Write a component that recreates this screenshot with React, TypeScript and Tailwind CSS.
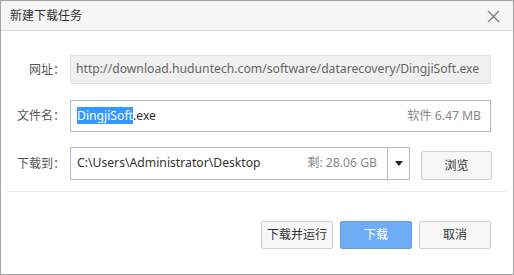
import React from "react";

const font = { fontFamily: '"Noto Sans", "Noto Sans CJK SC", sans-serif' };

export default function App() {
  return (
    <div
      className="w-[514px] h-[275px] bg-white border border-[#a3a3a3] flex flex-col text-[12.2px] text-[#333]"
      style={font}
    >
      <div className="h-[30px] bg-[#f5f5f5] border-b border-[#d9d9d9] flex items-center justify-between pl-[9px] pr-[13px] shrink-0">
        <span className="text-[12px] text-[#333] leading-none">新建下载任务</span>
        <svg width="13" height="13" viewBox="0 0 13 13" className="mt-[1px]">
          <path d="M1 1 L12 12 M12 1 L1 12" stroke="#777" strokeWidth="1.2" />
        </svg>
      </div>

      <div className="flex flex-col pt-[24px]">
        <div className="flex items-center h-[29px]">
          <div className="w-[69px] pr-[5px] text-right text-[#555] text-[12px]">网址：</div>
          <div className="w-[421px] h-[29px] bg-[#f0f0f0] border border-[#e0e0e0] flex items-center pl-[5px] text-[#666] whitespace-nowrap overflow-hidden">
            http://download.huduntech.com/software/datarecovery/DingjiSoft.exe
          </div>
        </div>

        <div className="flex items-center h-[32px] mt-[16px]">
          <div className="w-[69px] pr-[5px] text-right text-[#555] text-[12px]">文件名：</div>
          <div className="w-[421px] h-[32px] border border-[#aebfd0] flex items-center justify-between pl-[6px] pr-[9px] bg-white">
            <span className="text-[#333]">
              <span className="bg-[#3399ff] text-white">DingjiSoft</span>.exe
            </span>
            <span className="text-[#888]">软件 6.47 MB</span>
          </div>
        </div>

        <div className="flex items-center h-[33px] mt-[15px]">
          <div className="w-[69px] pr-[5px] text-right text-[#555] text-[12px]">下载到：</div>
          <div className="w-[340px] h-[33px] border border-[#aebfd0] flex items-center bg-white">
            <div className="flex-1 flex items-center justify-between pl-[6px] pr-[10px]">
              <span className="text-[#333]">C:\Users\Administrator\Desktop</span>
              <span className="text-[#888]">剩: 28.06 GB</span>
            </div>
            <div className="w-[22px] h-full border-l border-[#aebfd0] flex items-center justify-center">
              <svg width="8" height="5" viewBox="0 0 8 5">
                <path d="M0 0 L8 0 L4 5 Z" fill="#222" />
              </svg>
            </div>
          </div>
          <button className="ml-[11px] w-[71px] h-[29px] mt-[4px] border border-[#cfcfcf] bg-[#f6f6f6] rounded-[2px] text-[#333] text-[12px]">
            浏览
          </button>
        </div>

        <div className="mt-[11px] mx-[6px] h-px bg-[#e9e9e9]" />

        <div className="flex justify-end gap-[7px] pr-[22px] mt-[29px]">
          <button className="w-[72px] h-[28px] border border-[#cfcfcf] bg-[#f6f6f6] rounded-[2px] text-[#333] text-[12px]">
            下载并运行
          </button>
          <button className="w-[72px] h-[28px] border border-[#5f9fea] bg-[#6eacf6] rounded-[2px] text-white text-[12px]">
            下载
          </button>
          <button className="w-[72px] h-[28px] border border-[#cfcfcf] bg-[#f6f6f6] rounded-[2px] text-[#333] text-[12px]">
            取消
          </button>
        </div>
      </div>
    </div>
  );
}
